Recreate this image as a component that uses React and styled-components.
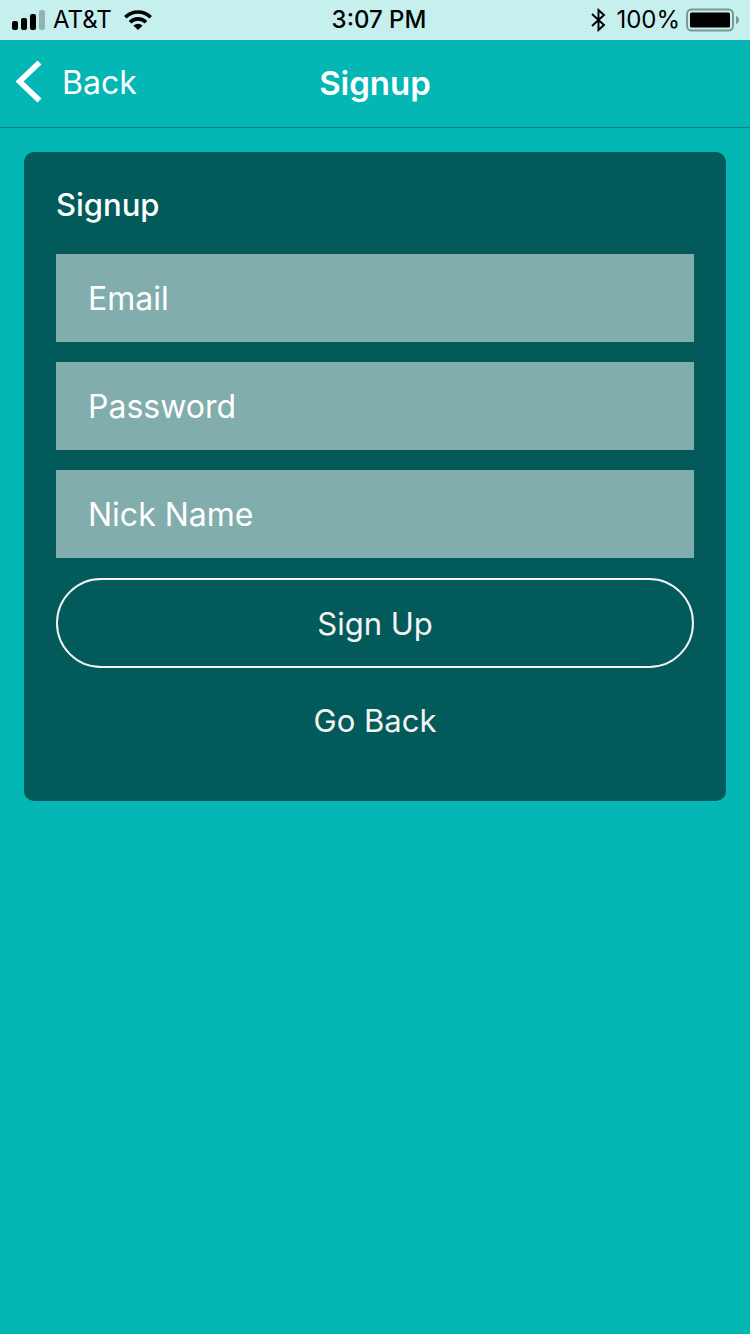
import React from "react";
import styled, { createGlobalStyle } from "styled-components";

const GlobalStyle = createGlobalStyle`
  *, *::before, *::after { box-sizing: border-box; }
  body {
    margin: 0;
    background: #04b6b4;
    font-family: Inter, "Liberation Sans", sans-serif;
    color: #ffffff;
  }
  button, input { font: inherit; color: inherit; }
`;

const StatusBar = styled.header`
  display: grid;
  grid-template-columns: 1fr auto 1fr;
  align-items: center;
  height: 40px;
  padding: 0 10px 0 12px;
  background: #c6f0ee;
  color: #000000;
  font-size: 24px;
  line-height: 40px;
`;

const StatusGroup = styled.div`
  display: flex;
  align-items: center;
  justify-content: ${(p) => (p.$end ? "flex-end" : "flex-start")};
  gap: ${(p) => (p.$end ? 6 : 8)}px;

  svg { display: block; flex: none; }
`;

const Clock = styled.time`
  font-weight: 500;
  padding-left: 6px;
`;

const Carrier = styled.span`
  padding-right: 4px;
`;

const Percent = styled.span`
  padding-left: 4px;
`;

const NavBar = styled.nav`
  display: grid;
  grid-template-columns: 1fr auto 1fr;
  align-items: center;
  height: 88px;
  padding: 0 16px 2px;
  border-bottom: 1px solid #048281;
`;

const BackButton = styled.button`
  display: flex;
  align-items: center;
  justify-self: start;
  gap: 20px;
  padding: 0;
  border: 0;
  background: none;
  font-size: 32px;
  line-height: 44px;
  cursor: pointer;

  svg { display: block; }
`;

const NavTitle = styled.h1`
  margin: 0;
  font-size: 33px;
  font-weight: 600;
  line-height: 44px;
`;

const Content = styled.main`
  padding: 24px;
`;

const Card = styled.form`
  display: flex;
  flex-direction: column;
  gap: 20px;
  padding: 32px 32px 48px;
  border-radius: 10px;
  background: #025b5a;
`;

const CardTitle = styled.h2`
  margin: 0;
  padding-bottom: 8px;
  font-size: 31px;
  font-weight: 500;
  line-height: 42px;
`;

const Field = styled.input`
  width: 100%;
  height: 88px;
  padding: 0 32px;
  border: 0;
  border-radius: 0;
  outline: 0;
  background: #81adac;
  font-size: 32px;

  &::placeholder { color: #ffffff; opacity: 1; }
`;

const Action = styled.button`
  height: ${(p) => (p.$outlined ? 90 : 65)}px;
  padding: 0;
  border: ${(p) => (p.$outlined ? "2px solid #f4f4f4" : "0")};
  border-radius: 45px;
  background: none;
  color: #f4f4f4;
  font-size: 31px;
  cursor: pointer;
`;

const fields = [
  { label: "Email", type: "email", name: "email" },
  { label: "Password", type: "password", name: "password" },
  { label: "Nick Name", type: "text", name: "nickname" },
];

const SignalIcon = () => (
  <svg width="33" height="20" viewBox="0 0 33 20" aria-hidden="true">
    <rect x="0" y="11" width="6" height="9" rx="2" />
    <rect x="9" y="8" width="6" height="12" rx="2" />
    <rect x="18" y="4" width="6" height="16" rx="2" />
    <rect x="27" y="0" width="6" height="20" rx="2" fill="#93b3b2" />
  </svg>
);

const WifiIcon = () => (
  <svg width="28" height="20" viewBox="0 0 28 20" aria-hidden="true">
    <g fill="none" stroke="#000" strokeWidth="3.6">
      <path d="M1.3 7.2A18 18 0 0 1 26.7 7.2" />
      <path d="M6 12.2A11.4 11.4 0 0 1 22 12.2" />
    </g>
    <path d="M14 20L9.3 15.6Q14 11.8 18.7 15.6Z" />
  </svg>
);

const BluetoothIcon = () => (
  <svg width="15" height="24" viewBox="0 0 15 24" aria-hidden="true">
    <path
      d="M1 6L13 17L7.5 22V2L13 7L1 18"
      fill="none"
      stroke="#000"
      strokeWidth="1.9"
    />
  </svg>
);

const BatteryIcon = () => (
  <svg width="54" height="24" viewBox="0 0 54 24" aria-hidden="true">
    <rect x="1" y="1.5" width="46" height="21" rx="4.5" fill="none" stroke="#7b9796" strokeWidth="2" />
    <rect x="4" y="4.5" width="40" height="15" rx="1.5" />
    <path d="M50 8Q53 9 53 12T50 16Z" fill="#7b9796" />
  </svg>
);

const ChevronIcon = () => (
  <svg width="26" height="44" viewBox="0 0 26 44" aria-hidden="true">
    <path d="M23.5 1.5L3.5 20.5L23.5 39.5" fill="none" stroke="#fff" strokeWidth="5.6" />
  </svg>
);

export default function App() {
  return (
    <>
      <GlobalStyle />
      <StatusBar>
        <StatusGroup>
          <SignalIcon />
          <Carrier>AT&amp;T</Carrier>
          <WifiIcon />
        </StatusGroup>
        <Clock>3:07 PM</Clock>
        <StatusGroup $end>
          <BluetoothIcon />
          <Percent>100%</Percent>
          <BatteryIcon />
        </StatusGroup>
      </StatusBar>
      <NavBar>
        <BackButton type="button">
          <ChevronIcon />
          Back
        </BackButton>
        <NavTitle>Signup</NavTitle>
      </NavBar>
      <Content>
        <Card onSubmit={(e) => e.preventDefault()}>
          <CardTitle>Signup</CardTitle>
          {fields.map((f) => (
            <Field
              key={f.name}
              type={f.type}
              name={f.name}
              placeholder={f.label}
              aria-label={f.label}
            />
          ))}
          <Action type="submit" $outlined>Sign Up</Action>
          <Action type="button">Go Back</Action>
        </Card>
      </Content>
    </>
  );
}
